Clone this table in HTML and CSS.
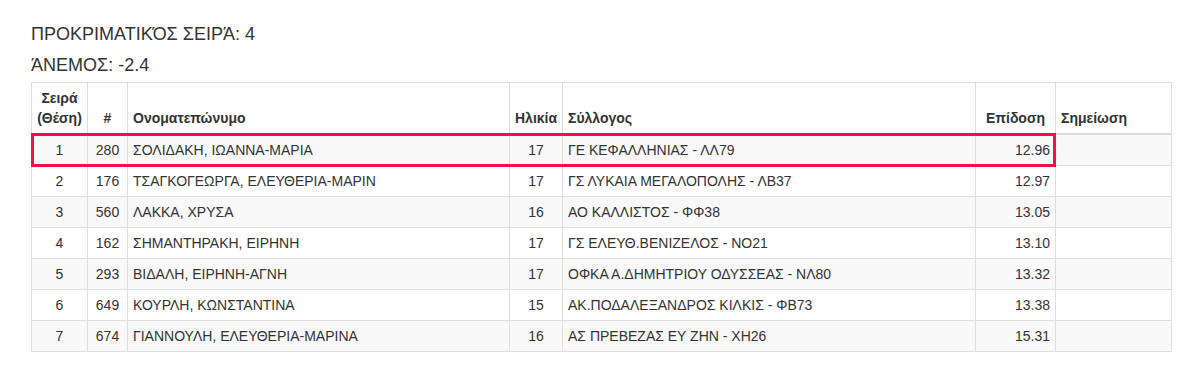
FILE: index.html
```html
<!DOCTYPE html>
<html lang="el">
<head>
<meta charset="utf-8">
<title>Προκριματικός Σειρά 4</title>
<link rel="stylesheet" href="styles.css">
</head>
<body>
<div class="container">
  <h4 class="heading">ΠΡΟΚΡΙΜΑΤΙΚΌΣ ΣΕΙΡΆ: 4</h4>
  <h4 class="heading heading-wind">ΆΝΕΜΟΣ: -2.4</h4>
  <table class="results">
    <colgroup>
      <col class="c-lane">
      <col class="c-bib">
      <col class="c-name">
      <col class="c-age">
      <col class="c-club">
      <col class="c-mark">
      <col class="c-note">
    </colgroup>
    <thead>
      <tr>
        <th class="center">Σειρά<br>(Θέση)</th>
        <th class="center">#</th>
        <th>Ονοματεπώνυμο</th>
        <th class="center">Ηλικία</th>
        <th>Σύλλογος</th>
        <th class="center">Επίδοση</th>
        <th>Σημείωση</th>
      </tr>
    </thead>
    <tbody>
      <tr class="hl">
        <td class="center first">1</td>
        <td class="center">280</td>
        <td>ΣΟΛΙΔΑΚΗ, ΙΩΑΝΝΑ-ΜΑΡΙΑ</td>
        <td class="center">17</td>
        <td>ΓΕ ΚΕΦΑΛΛΗΝΙΑΣ - ΛΛ79</td>
        <td class="right last">12.96</td>
        <td class="plain"></td>
      </tr>
      <tr>
        <td class="center">2</td>
        <td class="center">176</td>
        <td>ΤΣΑΓΚΟΓΕΩΡΓΑ, ΕΛΕΥΘΕΡΙΑ-ΜΑΡΙΝ</td>
        <td class="center">17</td>
        <td>ΓΣ ΛΥΚΑΙΑ ΜΕΓΑΛΟΠΟΛΗΣ - ΛΒ37</td>
        <td class="right">12.97</td>
        <td></td>
      </tr>
      <tr>
        <td class="center">3</td>
        <td class="center">560</td>
        <td>ΛΑΚΚΑ, ΧΡΥΣΑ</td>
        <td class="center">16</td>
        <td>ΑΟ ΚΑΛΛΙΣΤΟΣ - ΦΦ38</td>
        <td class="right">13.05</td>
        <td></td>
      </tr>
      <tr>
        <td class="center">4</td>
        <td class="center">162</td>
        <td>ΣΗΜΑΝΤΗΡΑΚΗ, ΕΙΡΗΝΗ</td>
        <td class="center">17</td>
        <td>ΓΣ ΕΛΕΥΘ.ΒΕΝΙΖΕΛΟΣ - ΝΟ21</td>
        <td class="right">13.10</td>
        <td></td>
      </tr>
      <tr>
        <td class="center">5</td>
        <td class="center">293</td>
        <td>ΒΙΔΑΛΗ, ΕΙΡΗΝΗ-ΑΓΝΗ</td>
        <td class="center">17</td>
        <td>ΟΦΚΑ Α.ΔΗΜΗΤΡΙΟΥ ΟΔΥΣΣΕΑΣ - ΝΛ80</td>
        <td class="right">13.32</td>
        <td></td>
      </tr>
      <tr>
        <td class="center">6</td>
        <td class="center">649</td>
        <td>ΚΟΥΡΛΗ, ΚΩΝΣΤΑΝΤΙΝΑ</td>
        <td class="center">15</td>
        <td>ΑΚ.ΠΟΔΑΛΕΞΑΝΔΡΟΣ ΚΙΛΚΙΣ - ΦΒ73</td>
        <td class="right">13.38</td>
        <td></td>
      </tr>
      <tr>
        <td class="center">7</td>
        <td class="center">674</td>
        <td>ΓΙΑΝΝΟΥΛΗ, ΕΛΕΥΘΕΡΙΑ-ΜΑΡΙΝΑ</td>
        <td class="center">16</td>
        <td>ΑΣ ΠΡΕΒΕΖΑΣ ΕΥ ΖΗΝ - ΧΗ26</td>
        <td class="right">15.31</td>
        <td></td>
      </tr>
    </tbody>
  </table>
</div>
</body>
</html>
```

FILE: styles.css
```css
html, body {
  margin: 0;
  padding: 0;
  background: #fff;
}

body {
  font-family: "Liberation Sans", Arial, Helvetica, sans-serif;
  font-size: 14px;
  line-height: 20px;
  color: #333;
}

.container {
  width: 1140px;
  margin: 0 auto;
  padding: 24px 15px 0;
}

.heading {
  margin: 0;
  font-size: 18px;
  line-height: 20px;
  font-weight: normal;
  color: #333;
}

.heading-wind {
  margin-top: 11px;
  margin-bottom: 7px;
}

.results {
  width: 1140px;
  table-layout: fixed;
  border-collapse: collapse;
  border-spacing: 0;
  border: 1px solid #ddd;
}

.c-lane { width: 56px; }
.c-bib { width: 40px; }
.c-name { width: 382px; }
.c-age { width: 53px; }
.c-club { width: 413px; }
.c-mark { width: 80px; }
.c-note { width: 116px; }

.results th,
.results td {
  padding: 5px;
  border: 1px solid #ddd;
  text-align: left;
  white-space: nowrap;
  overflow: visible;
}

.results th {
  vertical-align: bottom;
  font-weight: bold;
  border-bottom: 2px solid #ddd;
}

.results td {
  vertical-align: top;
}

.results tbody tr:nth-child(odd) td {
  background: #f9f9f9;
}

.results .center { text-align: center; }
.results .right { text-align: right; }

.results tr.hl td {
  position: relative;
}

.results tr.hl td::after {
  content: "";
  position: absolute;
  left: -1px;
  right: -1px;
  top: -2px;
  bottom: -2px;
  border-top: 3px solid #ef1247;
  border-bottom: 3px solid #ef1247;
  pointer-events: none;
}

.results tr.hl td.first::after {
  border-left: 3px solid #ef1247;
}

.results tr.hl td.last::after {
  border-right: 3px solid #ef1247;
}

.results tr.hl td.plain::after {
  display: none;
}
```
